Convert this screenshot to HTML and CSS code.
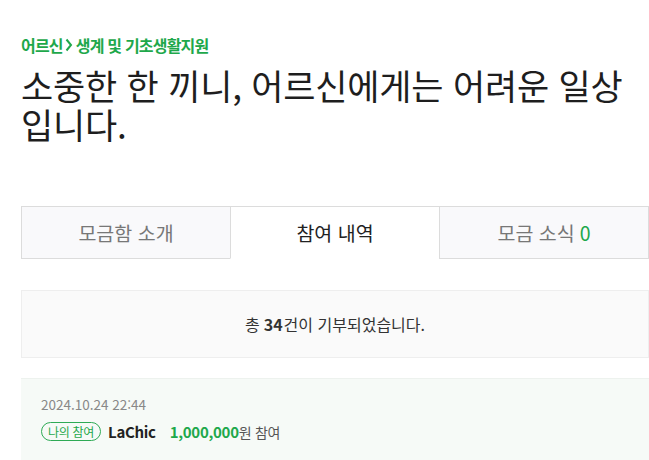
FILE: index.html
```html
<!DOCTYPE html>
<html lang="ko">
<head>
<meta charset="utf-8">
<link rel="stylesheet" href="styles.css">
</head>
<body>
<div class="page">
  <div class="crumb">어르신<svg class="sep" width="8" height="14" viewBox="0 0 8 14"><path d="M1.5 1.5 L6 7 L1.5 12.5" fill="none" stroke="#1ea84b" stroke-width="2"/></svg>생계 및 기초생활지원</div>
  <h1 class="title">소중한 한 끼니, 어르신에게는 어려운 일상<br>입니다.</h1>
  <div class="tabs">
    <div class="tab">모금함 소개</div>
    <div class="tab active">참여 내역</div>
    <div class="tab">모금 소식 <span class="num">0</span></div>
  </div>
  <div class="summary">총 <b>34</b>건이 기부되었습니다.</div>
  <div class="entry">
    <div class="date">2024.10.24 22:44</div>
    <div class="row">
      <span class="badge">나의 참여</span>
      <span class="name">LaChic</span>
      <span class="amount"><b>1,000,000</b>원 참여</span>
    </div>
  </div>
</div>
</body>
</html>
```
FILE: styles.css
```css
html, body {
  margin: 0;
  padding: 0;
  background: #fff;
  overflow: hidden;
}
body {
  font-family: "Noto Sans CJK KR", "Noto Sans", sans-serif;
  color: #222;
}
.page {
  width: 628px;
  padding: 34px 0 0 21px;
}
.crumb {
  display: flex;
  align-items: center;
  font-size: 16px;
  font-weight: 700;
  color: #1ea84b;
  line-height: 22px;
  letter-spacing: -0.8px;
  white-space: pre;
}
.sep {
  margin: 0 3px 0 2px;
}
.title {
  margin: 9px 0 0;
  font-size: 35px;
  font-weight: 400;
  line-height: 39px;
  color: #1e1e1e;
  letter-spacing: -0.2px;
}
.tabs {
  display: flex;
  margin-top: 63px;
  height: 53px;
}
.tab {
  flex: 1;
  display: flex;
  align-items: center;
  justify-content: center;
  font-size: 19.5px;
  color: #777;
  background: #f9f9fb;
  border: 1px solid #dcdcdc;
  border-right: none;
}
.tab:last-child {
  border-right: 1px solid #dcdcdc;
}
.tab.active {
  background: #fff;
  color: #222;
  border-bottom-color: #fff;
}
.num {
  color: #1ea84b;
  margin-left: 5px;
}
.summary {
  margin-top: 31px;
  height: 66px;
  display: flex;
  align-items: center;
  justify-content: center;
  background: #fafafa;
  border: 1px solid #eeeeee;
  font-size: 16px;
  color: #333;
}
.summary b {
  font-weight: 700;
  margin: 0 1px 0 4px;
}
.entry {
  margin-top: 20px;
  background: #f6faf7;
  border-top: 1px solid #edf2ee;
  padding: 16px 20px 20px;
  height: 60px;
}
.date {
  font-size: 13.5px;
  color: #888;
  line-height: 18px;
}
.row {
  display: flex;
  align-items: center;
  margin-top: 8px;
}
.badge {
  display: inline-flex;
  align-items: center;
  height: 17px;
  padding: 0 6px;
  border: 1px solid #2eaa55;
  border-radius: 10px;
  font-size: 12px;
  color: #1ea84b;
  letter-spacing: -0.3px;
}
.name {
  margin-left: 7px;
  font-size: 15px;
  font-weight: 700;
  color: #222;
  letter-spacing: -0.3px;
}
.amount {
  margin-left: 14px;
  font-size: 14px;
  color: #555;
  letter-spacing: -0.3px;
}
.amount b {
  font-size: 15px;
  color: #1ea84b;
  font-weight: 700;
}
```
